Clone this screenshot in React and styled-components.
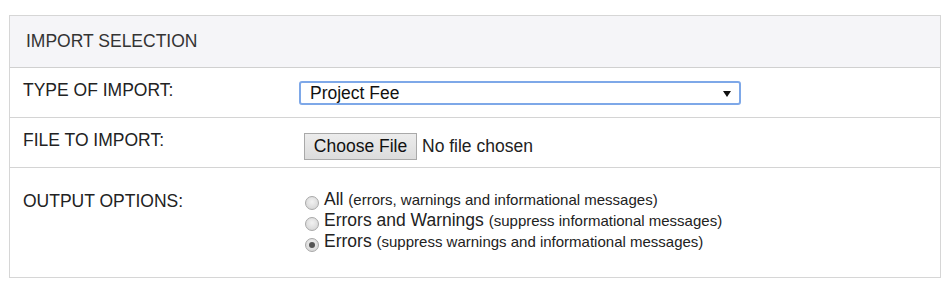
import React from 'react';
import styled, { createGlobalStyle } from 'styled-components';

const GlobalStyle = createGlobalStyle`
  body {
    margin: 0;
    background: #fff;
    font-family: "Liberation Sans", Arial, sans-serif;
    color: #333;
  }
`;

const Panel = styled.section`
  margin: 15px 0 0 9px;
  width: 932px;
  border: 1px solid #d6d6d6;
  box-sizing: border-box;
`;

const Header = styled.div`
  height: 51px;
  display: flex;
  align-items: center;
  padding-left: 16px;
  background: #f5f5f8;
  border-bottom: 1px solid #d0d0d0;
  font-size: 17.5px;
  color: #333;
`;

const Row = styled.div`
  display: grid;
  grid-template-columns: 276px 1fr;
  height: ${p => p.$h}px;
  padding-left: 13px;
  border-bottom: ${p => (p.$last ? 'none' : '1px solid #d4d4d4')};
  box-sizing: border-box;
`;

const Label = styled.div`
  padding-top: ${p => p.$top}px;
  font-size: 17.5px;
  line-height: 20px;
  color: #222;
`;

const Control = styled.div`
  padding-top: ${p => p.$top}px;
`;

const Select = styled.div`
  width: 442px;
  height: 24px;
  box-sizing: border-box;
  border: 2px solid #7ea8e8;
  border-radius: 3px;
  display: flex;
  align-items: center;
  justify-content: space-between;
  padding: 0 8px 0 9px;
  font-size: 17.5px;
  color: #111;
`;

const Arrow = styled.span`
  width: 0;
  height: 0;
  margin-top: 1px;
  border-left: 4px solid transparent;
  border-right: 4px solid transparent;
  border-top: 6px solid #111;
`;

const FileRow = styled.div`
  display: flex;
  align-items: center;
  margin-left: 5px;
  gap: 5px;
  font-size: 17.5px;
  color: #222;
`;

const FileButton = styled.div`
  width: 113px;
  height: 27px;
  box-sizing: border-box;
  border: 1px solid #a9a9a9;
  background: linear-gradient(#ececec, #dcdcdc);
  display: flex;
  align-items: center;
  justify-content: center;
  font-size: 17.5px;
  color: #111;
`;

const RadioList = styled.div`
  margin-left: 6px;
  display: flex;
  flex-direction: column;
`;

const RadioItem = styled.div`
  display: flex;
  align-items: center;
  height: 21px;
  gap: 5px;
`;

const Dot = styled.span`
  width: 14px;
  height: 14px;
  margin-top: 6px;
  box-sizing: border-box;
  border-radius: 50%;
  border: 1px solid #a8a8a8;
  background: radial-gradient(circle at 50% 40%, #f2f2f2, #d0d0d0);
  display: flex;
  align-items: center;
  justify-content: center;
  &::after {
    content: '';
    display: ${p => (p.$checked ? 'block' : 'none')};
    width: 6px;
    height: 6px;
    border-radius: 50%;
    background: #555;
  }
`;

const RadioText = styled.span`
  font-size: 17.5px;
  color: #222;
  small {
    font-size: 15px;
  }
`;

const options = [
  { name: 'All', note: '(errors, warnings and informational messages)' },
  { name: 'Errors and Warnings', note: '(suppress informational messages)' },
  { name: 'Errors', note: '(suppress warnings and informational messages)', checked: true },
];

export default function App() {
  return (
    <>
      <GlobalStyle />
      <Panel>
        <Header>IMPORT SELECTION</Header>
        <Row $h={50}>
          <Label $top={12}>TYPE OF IMPORT:</Label>
          <Control $top={13}>
            <Select>
              <span>Project Fee</span>
              <Arrow />
            </Select>
          </Control>
        </Row>
        <Row $h={50}>
          <Label $top={12}>FILE TO IMPORT:</Label>
          <Control $top={15}>
            <FileRow>
              <FileButton>Choose File</FileButton>
              <span>No file chosen</span>
            </FileRow>
          </Control>
        </Row>
        <Row $h={109} $last>
          <Label $top={23}>OUTPUT OPTIONS:</Label>
          <Control $top={21}>
            <RadioList>
              {options.map(o => (
                <RadioItem key={o.name}>
                  <Dot $checked={o.checked} />
                  <RadioText>
                    {o.name} <small>{o.note}</small>
                  </RadioText>
                </RadioItem>
              ))}
            </RadioList>
          </Control>
        </Row>
      </Panel>
    </>
  );
}
